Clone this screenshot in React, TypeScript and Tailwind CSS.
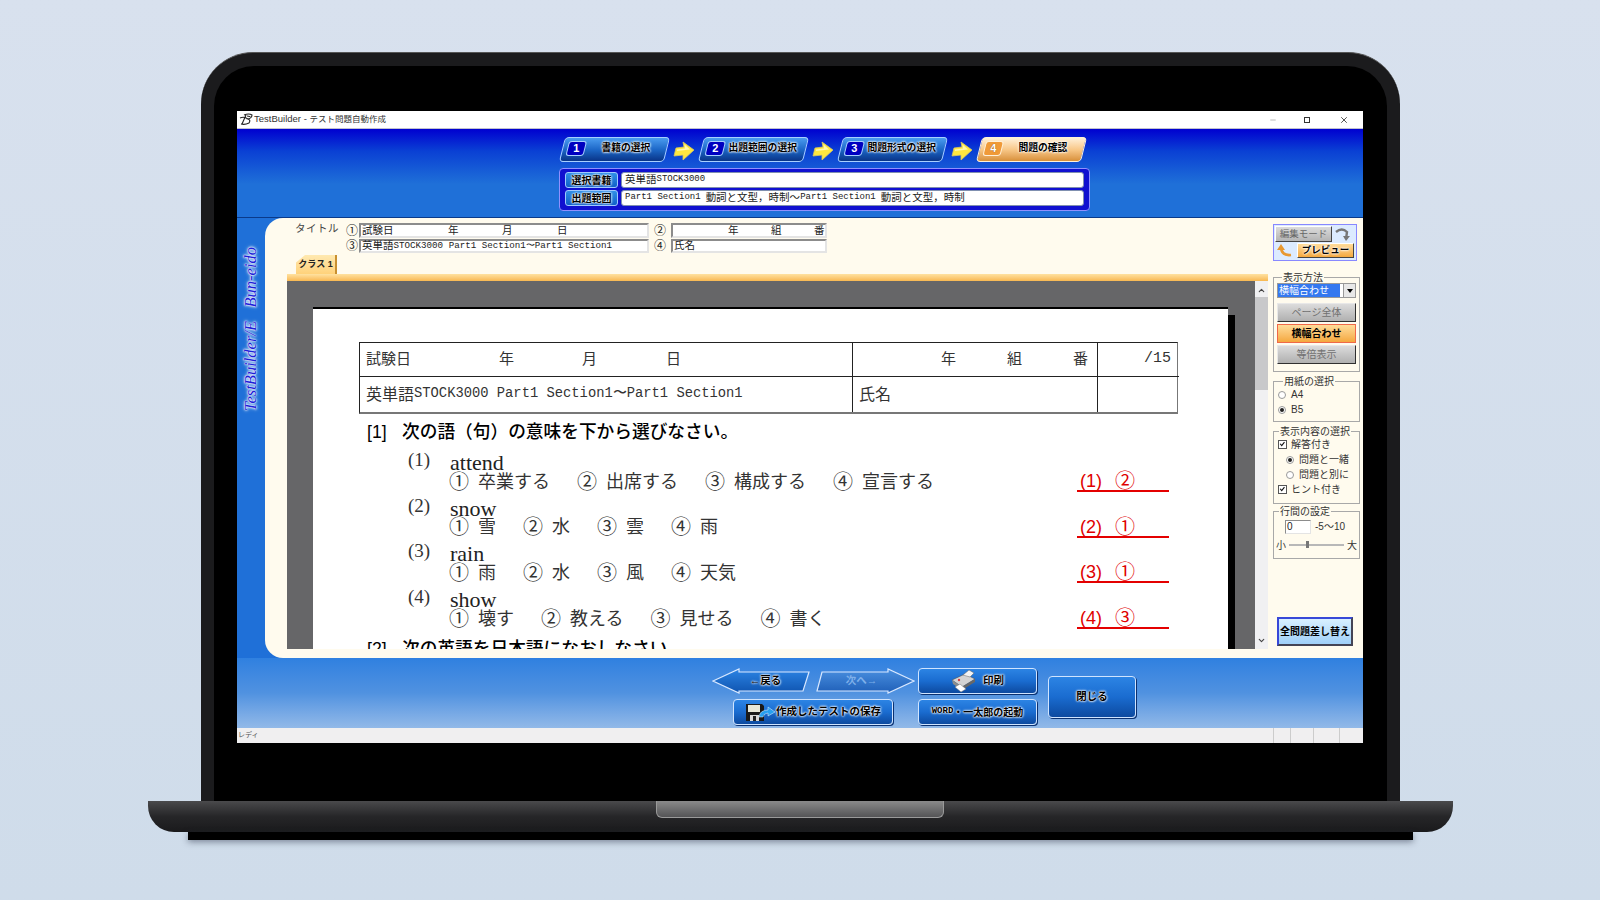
import React from 'react';
import { Minus, X, ChevronUp, ChevronDown } from 'lucide-react';

const glow = "[text-shadow:0_0_2px_#fff,0_0_2px_#fff,0_0_3px_#fff]";

// half width latin, the original app renders these in a thin gothic
const Mono: React.FC<{ size: string; children: React.ReactNode }> = ({ size, children }) => (
  <span className={`${size} font-['Liberation_Mono',monospace]`}>{children}</span>
);

const Arrow = () => (
  <svg width="22" height="22" viewBox="0 0 22 22" className="mx-[6px] translate-y-[2px] shrink-0">
    <path d="M3 7 L11 6 L10 1 L21 9 L10 19 L10 14 L1 15 Z" fill="#ffe840" stroke="#d8c860" strokeWidth="0.8" />
    <path d="M4 8.5 L12 7.5 L11.5 3.5 L17 8.5 L4 10 Z" fill="#fff8b0" />
  </svg>
);

const Step: React.FC<{ n: number; label: string; active?: boolean; pad: string }> = ({ n, label, active, pad }) => (
  <div className={`w-[105px] h-[25px] -skew-x-[14deg] rounded-[4px] border-[1.5px] flex items-center shrink-0 ${active ? 'border-[#fff0d8] bg-gradient-to-b from-[#fff0d8] via-[#f8c888] to-[#d89038]' : 'border-[#a8d0ff] bg-gradient-to-b from-[#4a9cf0] via-[#1d68c8] to-[#0a3488]'}`}>
    <div className={`ml-[4px] -mt-[3px] w-[18px] h-[15px] rounded-[3px] flex items-center justify-center border ${active ? 'bg-[#f09a38] border-[#fff0d8]' : 'bg-[#0000c0] border-[#a8d0ff]'}`}>
      <span className={`skew-x-[14deg] text-[11px] font-bold text-white font-['Liberation_Sans',sans-serif] ${active ? '[text-shadow:0_0_1px_#704000]' : ''}`}>{n}</span>
    </div>
    <span className={`-mt-[3px] skew-x-[14deg] text-[9.8px] leading-none font-bold text-black whitespace-nowrap ${pad} ${glow}`}>{label}</span>
  </div>
);

const Field: React.FC<{ label: string; children: React.ReactNode }> = ({ label, children }) => (
  <div className="flex gap-[3px] h-[16px]">
    <div className={`w-[53px] rounded-[3px] bg-gradient-to-b from-[#2f8fe8] to-[#0f5fc8] border border-[#9fc8ff] flex items-center justify-center text-[10px] font-bold text-black ${glow}`}>{label}</div>
    <div className="flex-1 rounded-[3px] bg-white border border-[#8090b0] flex items-center pl-[3px] text-[10.5px] text-[#222] whitespace-nowrap">{children}</div>
  </div>
);

const Inset: React.FC<{ className?: string; children?: React.ReactNode }> = ({ className, children }) => (
  <div className={`bg-white border-t-2 border-l-2 border-t-[#8c8c8c] border-l-[#8c8c8c] border-b-2 border-r-2 border-b-[#e4e4e4] border-r-[#e4e4e4] flex items-center text-[10.5px] text-[#222] whitespace-nowrap pl-px ${className ?? ''}`}>{children}</div>
);

const Circled: React.FC<{ c: string }> = ({ c }) => (
  <span className="text-[12px] text-[#222] leading-none flex items-center justify-center">{c}</span>
);

const GrayBtn: React.FC<{ children: React.ReactNode; on?: boolean }> = ({ children, on }) => (
  <div className={`h-[19px] flex items-center justify-center text-[10px] border ${on ? 'font-bold text-black border-[#f06848] bg-gradient-to-b from-[#ffdc98] to-[#f4a83c]' : 'text-[#707070] border-t-[#e8e8e8] border-l-[#e8e8e8] border-b-[#303030] border-r-[#303030] bg-gradient-to-b from-[#dcdcdc] to-[#b0b0b0]'}`}>{children}</div>
);

const Group: React.FC<{ title: string; className?: string; children: React.ReactNode }> = ({ title, className, children }) => (
  <fieldset className={`border border-[#a8a8a8] ${className ?? ''}`}>
    <legend className="ml-[5px] px-px text-[10px] leading-[11px] text-[#333]">{title}</legend>
    {children}
  </fieldset>
);

const Radio: React.FC<{ on?: boolean; label: string; cls?: string }> = ({ on, label, cls }) => (
  <div className={`flex items-center gap-[5px] h-[15px] text-[10px] text-[#333] ${cls ?? ''}`}>
    <span className="w-[8px] h-[8px] rounded-full border border-[#999] bg-white flex items-center justify-center">
      {on && <span className="w-[4px] h-[4px] rounded-full bg-[#222]" />}
    </span>
    {label}
  </div>
);

const Check: React.FC<{ label: string }> = ({ label }) => (
  <div className="flex items-center gap-[4px] h-[15px] text-[10px] text-[#333] pl-[4px]">
    <svg width="9" height="9" viewBox="0 0 9 9" className="bg-white border border-[#555]">
      <path d="M1.5 3.5 L3.5 6 L7 1.5" fill="none" stroke="#111" strokeWidth="1.4" />
    </svg>
    {label}
  </div>
);

const BlueBtn: React.FC<{ className?: string; children: React.ReactNode }> = ({ className, children }) => (
  <div className={`rounded-[4px] border border-[#cfe4ff] bg-gradient-to-b from-[#2c84e4] via-[#1a6cd0] to-[#0d4aa0] shadow-[1px_1px_0_#0a3070] flex items-center justify-center text-[10.5px] font-bold text-black ${glow} ${className ?? ''}`}>{children}</div>
);

const ArrowBtn: React.FC<{ dir: 'back' | 'next' }> = ({ dir }) => (
  <div className="grid w-[99px] h-[26px]">
    <svg width="99" height="26" viewBox="0 0 99 26" className="col-start-1 row-start-1">
      <defs>
        <linearGradient id={`arrow-${dir}`} x1="0" y1="0" x2="0" y2="1">
          <stop offset="0" stopColor={dir === 'back' ? '#2c84e4' : '#4a90e0'} />
          <stop offset="1" stopColor={dir === 'back' ? '#0f54b0' : '#1f5fb8'} />
        </linearGradient>
      </defs>
      <path
        d={dir === 'back'
          ? 'M1 13 L27 1 L27 4 L97 4 L91 23 L27 23 L27 25 Z'
          : 'M98 13 L72 1 L72 4 L6 4 L1 23 L72 23 L72 25 Z'}
        fill={`url(#arrow-${dir})`}
        stroke="#d8e8ff"
        strokeWidth="1.2"
      />
    </svg>
    <div className={`col-start-1 row-start-1 flex items-center justify-center text-[10.5px] font-bold ${dir === 'back' ? `text-black ${glow} pl-[8px]` : 'text-[#7fb0ea] pr-[8px]'}`}>
      {dir === 'back' ? '←戻る' : '次へ→'}
    </div>
  </div>
);

const Choices: React.FC<{ items: string[] }> = ({ items }) => (
  <div className="flex gap-[28px] h-[19px] items-center text-[18px] text-[#333]">
    {items.map((t, i) => (
      <span key={i} className="flex items-center gap-[10px] leading-none whitespace-nowrap">
        <span className="w-[18px] flex justify-center text-[20px]">{'①②③④'[i]}</span>
        <span>{t}</span>
      </span>
    ))}
  </div>
);

const questions = [
  { no: '(1)', word: 'attend', items: ['卒業する', '出席する', '構成する', '宣言する'], ans: '(1)', pick: '②' },
  { no: '(2)', word: 'snow', items: ['雪', '水', '雲', '雨'], ans: '(2)', pick: '①' },
  { no: '(3)', word: 'rain', items: ['雨', '水', '風', '天気'], ans: '(3)', pick: '①' },
  { no: '(4)', word: 'show', items: ['壊す', '教える', '見せる', '書く'], ans: '(4)', pick: '③' },
];

const Sheet = () => (
  <div className="bg-white w-[915px] h-full border-t-2 border-t-black pt-[33px] pl-[46px] pr-[50px] font-['Liberation_Serif','Noto_Sans_CJK_JP',serif]">
    {/* header table of the printed test */}
    <div className="grid grid-cols-[493px_245px_81px] grid-rows-[34px_35px] border border-[#222] border-r-[#777] border-b-[#777] border-b-2 text-[15px] text-[#333] font-['Liberation_Sans','Noto_Sans_CJK_JP',sans-serif]">
      <div className="border-b border-r border-[#222] flex items-center pl-[6px]">
        <span className="w-[133px]">試験日</span>
        <span className="w-[83px]">年</span>
        <span className="w-[84px]">月</span>
        <span>日</span>
      </div>
      <div className="border-b border-r border-[#222] flex items-center pl-[88px]">
        <span className="w-[66px]">年</span>
        <span className="w-[66px]">組</span>
        <span>番</span>
      </div>
      <div className="border-b border-[#222] flex items-center justify-end pr-[8px] font-['Liberation_Mono',monospace] text-[15px]">/15</div>
      <div className="border-r border-[#222] flex items-center pl-[6px] whitespace-nowrap text-[16px]">
        英単語<Mono size="text-[13.8px]">STOCK3000 Part1 Section1〜Part1 Section1</Mono>
      </div>
      <div className="border-r border-[#222] flex items-center pl-[6px] text-[16px]">氏名</div>
      <div />
    </div>

    <div className="mt-[8px] pl-[8px] flex items-center h-[20px] text-[17.7px] font-medium text-black font-['Liberation_Sans','Noto_Sans_CJK_JP',sans-serif] whitespace-nowrap">
      <span className="w-[35px]">[1]</span>
      {'次の語\uFF08句\uFF09の意味を下から選びなさい。'}
    </div>

    <div className="mt-[11px] pl-[49px]">
      {questions.map(q => (
        <div key={q.no} className="flex h-[45.7px]">
          <div className="w-[42px] text-[19px] leading-[19px] text-[#333] -mt-[3px]">{q.no}</div>
          <div className="flex-1">
            <div className="text-[22px] leading-[19px] text-[#222]">{q.word}</div>
            <Choices items={q.items} />
          </div>
          <div className="w-[92px] h-[39px] mr-[9px] flex items-end">
            <div className="w-full h-[20px] border-b-2 border-[#e40000] flex items-center gap-[13px] pl-[3px] text-[18px] leading-none text-[#e00000] whitespace-nowrap font-['Liberation_Sans','Noto_Sans_CJK_JP',sans-serif]">
              <span>{q.ans}</span>
              <span className="text-[20px]">{q.pick}</span>
            </div>
          </div>
        </div>
      ))}
    </div>

    <div className="pl-[8px] mt-[4px] flex items-center h-[20px] text-[17.7px] font-medium text-black font-['Liberation_Sans','Noto_Sans_CJK_JP',sans-serif] whitespace-nowrap">
      <span className="w-[35px]">[2]</span>
      次の英語を日本語になおしなさい。
    </div>
  </div>
);

const Viewer = () => (
  <div className="h-[368px] flex bg-[#666668] overflow-hidden">
    <div className="flex-1 pt-[26px] pl-[26px] flex min-w-0">
      <div className="flex h-[420px]">
        <Sheet />
        <div className="w-[7px] mt-[8px] bg-black" />
      </div>
    </div>
    <div className="w-[13px] bg-[#f0f0f2] flex flex-col items-center">
      <ChevronUp size={9} strokeWidth={3} className="mt-[5px] text-[#444]" />
      <div className="w-full h-[93px] mt-[2px] bg-[#c8c8ca]" />
      <div className="flex-1" />
      <ChevronDown size={9} strokeWidth={3} className="mb-[4px] text-[#444]" />
    </div>
  </div>
);

const SidePanel = () => (
  <div className="w-[95px] shrink-0 pt-[6px] pl-[5px] pr-[3px] flex flex-col text-[#333]">
    <div className="w-[84px] h-[37px] border border-[#8888ff] bg-[#dcebff] px-px pt-px flex flex-col gap-[1px]">
      <div className="flex items-center gap-[2px]">
        <div className="w-[57px] h-[16px] bg-gradient-to-b from-[#dcdcdc] to-[#b4b4b4] border border-b-[#444] border-r-[#444] border-t-white border-l-white text-[9.5px] text-[#666] flex items-center justify-center">編集モード</div>
        <svg width="18" height="15" viewBox="0 0 18 15">
          <path d="M2 5 Q8 0 13 5 L12 12" fill="none" stroke="#777" strokeWidth="2.4" />
          <path d="M9 9 L12 14 L16 9 Z" fill="#777" />
        </svg>
      </div>
      <div className="flex items-center gap-[2px]">
        <svg width="20" height="15" viewBox="0 0 20 15" className="shrink-0">
          <path d="M16 12 Q7 13 6 5" fill="none" stroke="#e89830" strokeWidth="2.6" />
          <path d="M2 7 L6 1 L10 7 Z" fill="#e89830" />
        </svg>
        <div className={`w-[57px] h-[15px] bg-gradient-to-b from-[#ffdc98] to-[#f4a83c] border border-b-[#444] border-r-[#444] border-t-white border-l-white text-[9.5px] font-bold text-black flex items-center justify-center ${glow}`}>プレビュー</div>
      </div>
    </div>

    <Group title="表示方法" className="w-[87px] h-[100px] mt-[11px] px-[3px]">
      <div className="h-[15px] flex items-center border border-[#999] bg-white">
        <span className="flex-1 bg-[#3478f0] text-white text-[10px] leading-[13px] pl-px whitespace-nowrap">横幅合わせ</span>
        <span className="w-[12px] h-full ml-[3px] bg-[#e8e8e8] border-l border-[#999] flex items-center justify-center">
          <span className="w-0 h-0 border-x-[3px] border-x-transparent border-t-[4px] border-t-black" />
        </span>
      </div>
      <div className="mt-[5px] flex flex-col gap-[2px]">
        <GrayBtn>ページ全体</GrayBtn>
        <GrayBtn on>横幅合わせ</GrayBtn>
        <GrayBtn>等倍表示</GrayBtn>
      </div>
    </Group>

    <Group title="用紙の選択" className="w-[87px] h-[46px] mt-[4px] px-[4px]">
      <Radio label="A4" />
      <Radio on label="B5" />
    </Group>

    <Group title="表示内容の選択" className="w-[87px] h-[78px] mt-[4px]">
      <Check label="解答付き" />
      <Radio on label="問題と一緒" cls="pl-[12px]" />
      <Radio label="問題と別に" cls="pl-[12px]" />
      <Check label="ヒント付き" />
    </Group>

    <Group title="行間の設定" className="w-[87px] h-[53px] mt-[2px]">
      <div className="flex items-center gap-[4px] pl-[11px] pt-[2px]">
        <Inset className="w-[26px] h-[14px] !border-[1px] text-[10px]">0</Inset>
        <span className="text-[10px]">-5〜10</span>
      </div>
      <div className="flex items-center h-[16px] mt-[3px] px-[2px] text-[10px] gap-[3px]">
        <span>小</span>
        <div className="relative flex-1 h-[2px] bg-[#b8b8b8]">
          <div className="absolute left-[17px] -top-[3px] w-[3px] h-[7px] bg-[#777]" />
        </div>
        <span>大</span>
      </div>
    </Group>

    <div className="flex-1" />
    <div className="w-[76px] h-[29px] ml-[4px] mb-[12px] border-2 border-[#3848d8] border-b-[#445] border-r-[#445] bg-gradient-to-b from-[#d8f0ff] to-[#a0d0f8] flex items-center justify-center text-[10px] font-bold text-black whitespace-nowrap">全問題差し替え</div>
  </div>
);

export default function App() {
  return (
    <div className="w-[1600px] h-[900px] overflow-hidden flex flex-col items-center pt-[52px] bg-gradient-to-b from-[#d8e1ee] to-[#cfdcea] font-['Liberation_Sans','Noto_Sans_CJK_JP',sans-serif]">
      {/* lid */}
      <div className="w-[1199px] h-[749px] shrink-0 rounded-t-[52px] bg-[#1b1b1d] pt-[13px] px-[13px] border-t border-[#555]">
        <div className="h-full rounded-t-[40px] bg-black pt-[45px] px-[23px] flex flex-col items-center">
          <div className="w-[1126px] h-[632px] shrink-0 flex flex-col bg-white">
            {/* title bar */}
            <div className="h-[18px] flex items-center pl-[2px] bg-white border-b border-[#c0c0d0] text-[9.5px] text-[#333]">
              <svg width="14" height="13" viewBox="0 0 14 13" className="mr-[1px]">
                <path d="M5 2 Q10 0 13 2 Q13 5 9 6 Q12 7 10 10 Q6 12 2 11 M7 2 L3 11 M1 5 Q5 3 9 6 M8 3 Q11 3 11 4" fill="none" stroke="#222" strokeWidth="1.1" />
              </svg>
              <span>TestBuilder - <span className="text-[8.5px]">テスト問題自動作成</span></span>
              <div className="flex-1" />
              <Minus size={8} className="text-[#999] mr-[27px]" />
              <div className="w-[6px] h-[6px] border border-[#333] mr-[29px]" />
              <X size={10} className="text-[#333] mr-[14px]" />
            </div>

            {/* blue body */}
            <div className="flex-1 flex flex-col bg-[linear-gradient(#0000d0_0,#0a40d4_22px,#1f70d8_55px,#1f70d8_100%)] min-h-0">
              {/* steps and selection */}
              <div className="h-[89px] shrink-0 pl-[322px] border-b border-[#0a3a8a]">
                <div className="flex items-center h-[33px] pt-[8px] pl-[3px]">
                  <Step n={1} label="書籍の選択" pad="pl-[16px]" />
                  <Arrow />
                  <Step n={2} label="出題範囲の選択" pad="pl-[4px]" />
                  <Arrow />
                  <Step n={3} label="問題形式の選択" pad="pl-[4px]" />
                  <Arrow />
                  <Step n={4} label="問題の確認" active pad="pl-[16px]" />
                </div>
                <div className="mt-[6px] w-[531px] h-[43px] rounded-[4px] bg-[#1010d0] border border-[#9090ff] px-[5px] pt-[3px] flex flex-col gap-[2px]">
                  <Field label="選択書籍">英単語<Mono size="text-[9px]">STOCK3000</Mono></Field>
                  <Field label="出題範囲">
                    <Mono size="text-[9px]">Part1 Section1 </Mono>
                    <span className="ml-[5px]">{'動詞と文型\uFF0C時制〜'}</span>
                    <Mono size="text-[9px]">Part1 Section1 </Mono>
                    <span className="ml-[5px]">{'動詞と文型\uFF0C時制'}</span>
                  </Field>
                </div>
              </div>

              {/* work area */}
              <div className="h-[440px] shrink-0 flex">
                <div className="w-[28px] shrink-0 flex flex-col items-center pt-[29px] gap-[14px] font-['Liberation_Serif',serif] italic text-[16.5px] text-[#1c20d8] [text-shadow:0_0_1px_#fff,0_0_2px_#fff,0_0_3px_#fff,0_0_4px_#cfe4ff]">
                  <span className="[writing-mode:vertical-rl] rotate-180 leading-none">Bun-eido</span>
                  <span className="[writing-mode:vertical-rl] rotate-180 leading-none">TestBuilder/E</span>
                </div>
                <div className="flex-1 flex rounded-l-[18px] bg-[#fffbee] pl-[22px] min-w-0">
                  <div className="flex-1 min-w-0 flex flex-col">
                    <div className="h-[37px] pt-[5px] flex">
                      <div className="w-[58px] pl-[8px] text-[10.5px] tracking-[0.5px] text-[#444] leading-[11px]">タイトル</div>
                      <div className="grid grid-cols-[14px_290px_22px_156px] grid-rows-[15px_14px] gap-y-[1px]">
                        <Circled c="①" />
                        <Inset>
                          <span className="w-[86px]">試験日</span>
                          <span className="w-[54px]">年</span>
                          <span className="w-[55px]">月</span>
                          <span>日</span>
                        </Inset>
                        <Circled c="②" />
                        <Inset>
                          <span className="ml-[54px] w-[43px]">年</span>
                          <span className="w-[43px]">組</span>
                          <span>番</span>
                        </Inset>
                        <Circled c="③" />
                        <Inset>英単語<Mono size="text-[9.2px]">STOCK3000 Part1 Section1〜Part1 Section1</Mono></Inset>
                        <Circled c="④" />
                        <Inset>氏名</Inset>
                      </div>
                    </div>
                    <div className="h-[19px] pl-[9px] flex">
                      <div className="w-[41px] bg-gradient-to-b from-[#ffe9b0] to-[#ffd27a] border-r-2 border-[#c89030] flex items-center justify-center text-[9px] font-bold text-[#222] [clip-path:polygon(22%_0,100%_0,100%_100%,0_100%,0_40%)]">クラス 1</div>
                    </div>
                    <div className="h-[7px] bg-gradient-to-b from-[#ffe2a0] to-[#f8b850]" />
                    <Viewer />
                  </div>
                  <SidePanel />
                </div>
              </div>

              {/* bottom buttons */}
              <div className="flex-1 flex pl-[475px] pt-[10px] gap-[3px] bg-gradient-to-b from-[#2f80e0] via-[#5092e0] to-[#92b9e8]">
                <div className="w-[203px] flex flex-col gap-[5px]">
                  <div className="flex gap-[5px]">
                    <ArrowBtn dir="back" />
                    <ArrowBtn dir="next" />
                  </div>
                  <BlueBtn className="ml-[21px] w-[160px] h-[26px]">
                    <svg width="31" height="19" viewBox="0 0 31 19">
                      <path d="M1 1 L17 1 L19 3 L19 18 L1 18 Z" fill="#1a1a1a" />
                      <rect x="3" y="2" width="12" height="7" fill="#e8e8d8" />
                      <rect x="5" y="12" width="9" height="6" fill="#d8d8d8" />
                      <rect x="8" y="13" width="3" height="5" fill="#222" />
                      <path d="M14 14 Q15 7 23 7 L23 4 L30 9 L23 13 L23 10 Q19 10 18 14 Z" fill="#28a0f0" stroke="#e8f4ff" strokeWidth="0.5" />
                    </svg>
                    作成したテストの保存
                  </BlueBtn>
                </div>
                <div className="w-[119px] flex flex-col gap-[5px]">
                  <BlueBtn className="h-[26px] gap-[7px]">
                    <svg width="25" height="24" viewBox="0 0 25 24">
                      <path d="M1 11 L14 5 L24 10 L11 18 Z" fill="#d4d4d4" stroke="#444" strokeWidth="0.5" />
                      <path d="M1 11 L11 18 L11 21 L2 15 Z" fill="#8c8c8c" />
                      <path d="M11 18 L24 10 L24 13 L11 21 Z" fill="#686868" />
                      <path d="M12 6 L18 1 L23 4 L19 8 Z" fill="#f4f4f4" stroke="#666" strokeWidth="0.5" />
                      <path d="M4 18 L9 15 L15 20 L10 23 Z" fill="#fff" stroke="#777" strokeWidth="0.5" />
                      <circle cx="8" cy="11" r="1.2" fill="#d84040" />
                    </svg>
                    印刷
                  </BlueBtn>
                  <BlueBtn className="h-[26px] whitespace-nowrap text-[10px]">
                    <Mono size="text-[9px]">WORD</Mono>・一太郎の起動
                  </BlueBtn>
                </div>
                <BlueBtn className="ml-[8px] mt-[8px] w-[88px] h-[42px]">閉じる</BlueBtn>
              </div>
            </div>

            {/* status bar */}
            <div className="h-[15px] shrink-0 bg-[#f0eff0] flex items-center pl-[1px] text-[7px] text-[#555]">
              <span>レディ</span>
              <div className="flex-1" />
              <div className="w-[17px] h-full border-l border-[#ccc]" />
              <div className="w-[23px] h-full border-l border-[#ccc]" />
              <div className="w-[26px] h-full border-l border-[#ccc]" />
              <div className="w-[24px] h-full border-l border-[#ccc]" />
            </div>
          </div>
        </div>
      </div>

      {/* base */}
      <div className="w-[1305px] h-[31px] shrink-0 rounded-b-[26px] bg-gradient-to-b from-[#4a4a4c] via-[#262628] to-[#1a1a1c] flex justify-center">
        <div className="w-[288px] h-[17px] rounded-b-[6px] bg-gradient-to-b from-[#8a8a8a] to-[#555557] border-x border-b border-[#9a9a9a]" />
      </div>
      <div className="w-[1225px] h-[8px] shrink-0 bg-black shadow-[0_2px_6px_rgba(40,50,70,0.5)]" />
    </div>
  );
}
